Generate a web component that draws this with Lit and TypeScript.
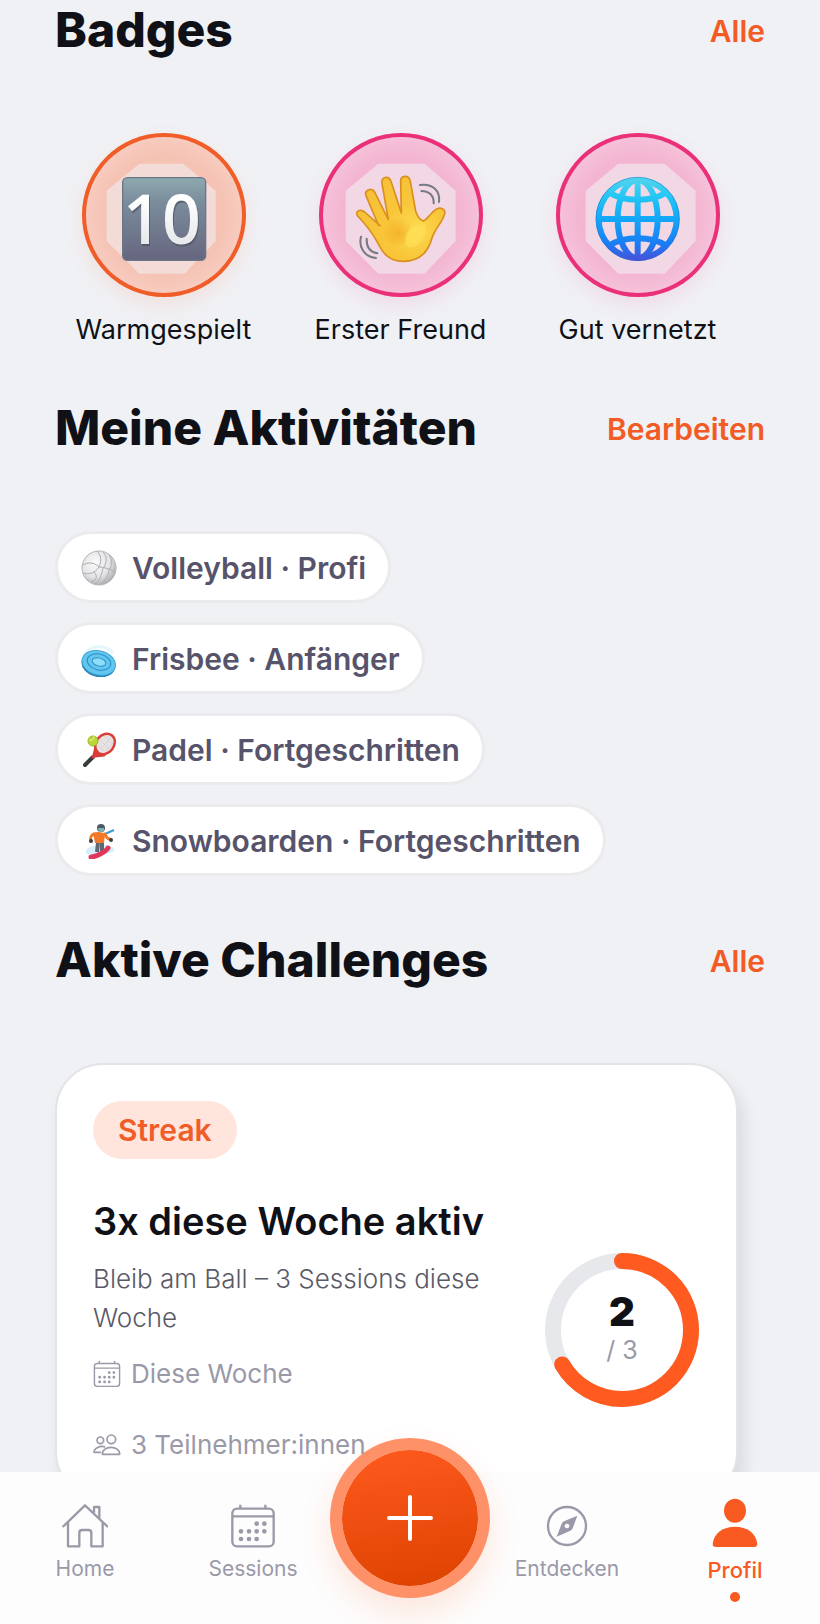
import { LitElement, html, css, CSSResult, TemplateResult } from "lit";
import { customElement, property } from "lit/decorators.js";

const warmgespielt = html`
    <svg viewBox="66 39 492 492" aria-hidden="true">
        <defs>
            <linearGradient id="tile" x1="0" y1="0" x2="0" y2="1">
                <stop offset="0" stop-color="#8ea9b0" />
                <stop offset="0.3" stop-color="#7a8c9b" />
                <stop offset="1" stop-color="#66667f" />
            </linearGradient>
            <linearGradient id="digits" x1="0" y1="0" x2="0" y2="1">
                <stop offset="0.3" stop-color="#ffffff" />
                <stop offset="1" stop-color="#dcdee2" />
            </linearGradient>
        </defs>
        <path d="M238 131H370L467 212V363L374 461H238L140 363V212Z" fill="#f0f2f6" fill-opacity="0.55" />
        <rect x="188" y="173" width="249" height="248" rx="14" fill="url(#tile)" stroke="#6b7787" stroke-width="4" />
        <g font-family="Open Sans, sans-serif" font-size="204" font-weight="600" text-anchor="middle">
            <text x="309" y="377" fill="#4b5363" fill-opacity="0.7">10</text>
            <text x="306" y="372" fill="url(#digits)">10</text>
        </g>
    </svg>
`;

const ersterFreund = html`
    <svg viewBox="57 39 492 492" aria-hidden="true">
        <defs>
            <radialGradient id="palm" gradientUnits="userSpaceOnUse" cx="345" cy="330" r="170">
                <stop offset="0" stop-color="#fddc50" />
                <stop offset="0.5" stop-color="#f9c63a" />
                <stop offset="1" stop-color="#f6c136" />
            </radialGradient>
            <radialGradient id="crease" gradientUnits="userSpaceOnUse" cx="295" cy="338" r="50">
                <stop offset="0" stop-color="#f0a01f" stop-opacity="0.6" />
                <stop offset="1" stop-color="#f0a01f" stop-opacity="0" />
            </radialGradient>
        </defs>
        <path d="M235 131H374L467 212V363L374 461H235L137 363V212Z" fill="#f0f2f6" fill-opacity="0.55" />
        <path
            d="M235 315L198 227C192 211 214 201 224 216L265 299L246 191C243 170 266 165 273 184L304 279L302 184C302 165 327 163 331 184L347 273C352 290 359 299 369 303C378 303 392 279 407 269C421 259 438 267 434 281C427 308 404 326 395 357C385 393 360 424 309 424C266 424 249 399 234 370C222 347 199 315 173 288C164 274 179 265 194 276L240 317Z"
            fill="url(#palm)"
            stroke="#d98f20"
            stroke-width="5"
            stroke-linejoin="round"
        />
        <path d="M244 312C263 299 286 297 306 292C324 287 341 288 350 297C335 319 318 330 312 373C290 382 258 370 240 335Z" fill="url(#crease)" />
        <path d="M320 380C310 345 335 312 372 312C392 330 360 392 320 380Z" fill="#ffe15a" fill-opacity="0.6" />
        <g fill="none" stroke="#777985" stroke-width="6" stroke-linecap="round">
            <path d="M360 195C397 190 421 211 417 246" />
            <path d="M364 213C388 213 402 227 401 250" />
            <path d="M183 350C175 380 193 411 228 414" />
            <path d="M200 356C199 380 211 396 232 400" />
        </g>
    </svg>
`;

const gutVernetzt = html`
    <svg viewBox="48 39 492 492" aria-hidden="true">
        <defs>
            <linearGradient id="globe" gradientUnits="userSpaceOnUse" x1="0" y1="170" x2="0" y2="423">
                <stop offset="0" stop-color="#55d5ee" />
                <stop offset="0.25" stop-color="#22c5f5" />
                <stop offset="0.5" stop-color="#12a7f8" />
                <stop offset="0.8" stop-color="#1a7cf5" />
                <stop offset="1" stop-color="#4a4fd8" />
            </linearGradient>
        </defs>
        <path d="M235 131H374L467 212V363L374 461H235L137 363V212Z" fill="#f0f2f6" fill-opacity="0.55" />
        <g fill="none" stroke="url(#globe)" stroke-width="18">
            <circle cx="293" cy="297" r="117" />
            <ellipse cx="293" cy="297" rx="60" ry="117" />
            <path d="M284 180H302V414H284Z" stroke="none" fill="url(#globe)" />
            <path d="M176 288H410V306H176Z" stroke="none" fill="url(#globe)" />
            <path d="M207 217C250 247 336 247 379 217" />
            <path d="M207 377C250 347 336 347 379 377" />
        </g>
        <circle cx="293" cy="297" r="125" fill="none" stroke="#1d74bd" stroke-opacity="0.5" stroke-width="3" />
    </svg>
`;

const volleyball = html`
    <svg viewBox="0 0 36 36" aria-hidden="true">
        <defs>
            <radialGradient id="ball" cx="0.4" cy="0.35" r="0.7">
                <stop offset="0" stop-color="#fbfbfb" />
                <stop offset="0.6" stop-color="#e4e4e6" />
                <stop offset="1" stop-color="#a9a9ad" />
            </radialGradient>
        </defs>
        <circle cx="18" cy="18" r="17" fill="url(#ball)" stroke="#b4b4b8" />
        <path
            d="M18 17C13 12 7 12 2 15M18 17C14 23 8 25 2 23M18 17C21 10 20 5 16 1M18 17C23 17 29 19 34 22M22 18C21 25 18 31 14 34M28 19C28 25 24 31 20 34M13 22C16 25 17 30 10 32M22 2C26 6 26 12 23 17M28 5C31 9 31 14 29 19"
            fill="none"
            stroke="#adadb2"
        />
    </svg>
`;

const frisbee = html`
    <svg viewBox="0 0 36 36" aria-hidden="true">
        <path d="M4 13C9 4 25 3 32 12" fill="none" stroke="#e4f5fc" stroke-width="3" />
        <g transform="rotate(14 18 21)">
            <ellipse cx="18" cy="24" rx="17" ry="12" fill="#2583b8" />
            <ellipse cx="18" cy="22" rx="17" ry="12" fill="#62c6f0" stroke="#3ea5d4" />
            <g fill="none" stroke="#2790c4">
                <ellipse cx="18" cy="21" rx="12" ry="8" />
                <ellipse cx="18" cy="21" rx="7" ry="4" fill="#8fdcf8" />
            </g>
        </g>
    </svg>
`;

const racket = html`
    <svg viewBox="0 0 36 36" aria-hidden="true">
        <path d="M12 25L4 33" stroke="#363c3b" stroke-width="4" stroke-linecap="round" />
        <path d="M12 25L17 20M13 23L15 15M14 24L23 23" stroke="#d83a35" stroke-width="3" stroke-linecap="round" />
        <ellipse cx="24" cy="12" rx="9" ry="11" transform="rotate(38 24 12)" fill="#e8e3e3" stroke="#dc3d38" stroke-width="2.5" />
        <path d="M19 8L28 17M23 4L32 12M17 13L23 19M20 17L30 5M25 20L33 9" stroke="#d4ced0" stroke-width="0.7" />
        <circle cx="12" cy="9" r="5" fill="#bcd838" stroke="#98b428" />
        <path d="M8 8C11 9 13 7 13 4" fill="none" stroke="#e9f4a0" />
    </svg>
`;

const snowboarder = html`
    <svg viewBox="0 0 36 36" aria-hidden="true">
        <path d="M5 31C4 25 10 22 18 23C26 21 35 24 33 28C29 31 27 29 24 32Z" fill="#d4effa" />
        <path d="M24 11L33 7" stroke="#3c9bd8" stroke-width="2" />
        <path d="M13 11C10 12 9 15 10 18M24 11C25 14 27 16 29 16" fill="none" stroke="#ef7a2b" stroke-width="3" stroke-linecap="round" />
        <path d="M12 10C16 8 22 9 24 11L23 20H14Z" fill="#f2782a" />
        <path d="M17 20L16 29M21 20L21 28" fill="none" stroke="#5f6770" stroke-width="4" stroke-linejoin="round" />
        <path d="M10 34C14 34 25 29 27 25" fill="none" stroke="#e0385c" stroke-width="5" stroke-linecap="round" />
        <circle cx="20" cy="5" r="4" fill="#4d5b61" />
        <path d="M17 5H23V9H18Z" fill="#7fb1b4" />
        <circle cx="10" cy="18" r="2" fill="#38414a" />
        <circle cx="30" cy="17" r="2" fill="#38414a" />
    </svg>
`;

const calendar = html`
    <svg viewBox="690 218 138 138" fill="none" stroke="currentColor" stroke-width="7" aria-hidden="true">
        <rect x="697" y="235" width="124" height="113" rx="14" />
        <path d="M697 258H821M721 223V235M796 223V235" />
        <path
            d="M770 280h0M793 280h0M723 303h0M747 303h0M770 303h0M793 303h0M723 326h0M747 326h0M770 326h0"
            stroke-width="14"
            stroke-linecap="round"
        />
    </svg>
`;

const people = html`
    <svg viewBox="163 750 84 84" fill="none" stroke="currentColor" stroke-width="5" stroke-linejoin="round" aria-hidden="true">
        <circle cx="185" cy="778" r="10" />
        <circle cx="218" cy="775" r="13" />
        <path d="M191 820C190 792 244 792 243 820Z" />
        <path d="M200 798C184 793 166 801 166 814H187" />
    </svg>
`;

const home = html`
    <svg viewBox="183 218 138 138" fill="none" stroke="currentColor" stroke-width="7" stroke-linejoin="round" aria-hidden="true">
        <path d="M185 290L252 225L321 290" />
        <path d="M201 277V348H235V307Q235 299 243 299H263Q271 299 271 307V348H305V277" />
        <path d="M279 247V230H295V264" />
    </svg>
`;

const compass = html`
    <svg viewBox="403 218 138 138" aria-hidden="true">
        <circle cx="472" cy="287" r="57" fill="none" stroke="currentColor" stroke-width="7" />
        <path
            fill="currentColor"
            fill-rule="evenodd"
            d="M503 256L489 294Q487 299 482 301L441 319L456 280Q458 275 463 273ZM472 280a7 7 0 1 0 .1 0Z"
        />
    </svg>
`;

const person = html`
    <svg viewBox="903 204 150 150" fill="currentColor" aria-hidden="true">
        <ellipse cx="978" cy="242" rx="33" ry="36" />
        <path d="M921 351Q911 351 911 342C914 309 943 290 978 290C1013 290 1042 309 1045 342Q1045 351 1035 351Z" />
    </svg>
`;

@customElement("section-header")
export class SectionHeader extends LitElement {
    @property({ type: String }) heading = "";
    @property({ type: String }) action = "";

    static get styles(): CSSResult {
        return css`
            :host {
                align-items: center;
                display: flex;
                justify-content: space-between;
                margin-bottom: 75px;
            }

            .heading {
                color: #101117;
                font-size: 48px;
                font-weight: 800;
                line-height: 56px;
                margin: 0;
            }

            .action {
                color: #f35b26;
                font-size: 30px;
                font-weight: 600;
                line-height: 34px;
                padding-top: 2px;
                text-decoration: none;
            }
        `;
    }

    render(): TemplateResult {
        return html`
            <h2 class="heading">${this.heading}</h2>
            <a class="action" href="#">${this.action}</a>
        `;
    }
}

@customElement("progress-ring")
export class ProgressRing extends LitElement {
    @property({ type: Number }) value = 0;
    @property({ type: Number }) max = 1;

    static get styles(): CSSResult {
        return css`
            :host {
                display: grid;
                flex: none;
                height: 156px;
                place-items: center;
                width: 156px;
            }

            .ring,
            .text {
                grid-area: 1 / 1;
            }

            .ring {
                display: block;
                fill: none;
                height: 100%;
                stroke-width: 16px;
                width: 100%;
            }

            .track {
                stroke: #e6e8ec;
            }

            .bar {
                stroke: #ff5a1f;
                stroke-linecap: round;
            }

            .text {
                text-align: center;
            }

            .value {
                color: #101117;
                font-size: 40px;
                font-weight: 900;
                line-height: 40px;
            }

            .max {
                color: #9a99a8;
                font-size: 25px;
                line-height: 36px;
            }
        `;
    }

    render(): TemplateResult {
        const done = (this.value / this.max) * 100;
        return html`
            <svg class="ring" viewBox="0 0 156 156" aria-hidden="true">
                <circle class="track" cx="78" cy="78" r="69" />
                <circle
                    class="bar"
                    cx="78"
                    cy="78"
                    r="69"
                    pathLength="100"
                    stroke-dasharray="${done} 100"
                    transform="rotate(-90 78 78)"
                />
            </svg>
            <div class="text">
                <div class="value">${this.value}</div>
                <div class="max">/ ${this.max}</div>
            </div>
        `;
    }
}

@customElement("app-root")
export class AppRoot extends LitElement {
    private badges = [
        { name: "Warmgespielt", tone: "orange", art: warmgespielt },
        { name: "Erster Freund", tone: "pink", art: ersterFreund },
        { name: "Gut vernetzt", tone: "pink", art: gutVernetzt },
    ];

    private activities = [
        { name: "Volleyball · Profi", icon: volleyball },
        { name: "Frisbee · Anfänger", icon: frisbee },
        { name: "Padel · Fortgeschritten", icon: racket },
        { name: "Snowboarden · Fortgeschritten", icon: snowboarder },
    ];

    static get styles(): CSSResult {
        return css`
            :host {
                background-color: #f0f1f5;
                color: #101117;
                display: flex;
                flex-direction: column;
                font-family: Inter, "Liberation Sans", sans-serif;
                height: 100vh;
            }

            * {
                box-sizing: border-box;
            }

            svg {
                display: block;
            }

            .content {
                display: flex;
                flex: 1;
                flex-direction: column;
                gap: 54px;
                min-height: 0;
                overflow-y: auto;
                padding: 2px 55px 0;
                scrollbar-width: none;
            }

            .badges,
            .activities {
                list-style: none;
                margin: 0;
                padding: 0;
            }

            .badges {
                display: grid;
                gap: 20px;
                grid-template-columns: repeat(3, 1fr);
                margin-right: 19px;
            }

            .badge {
                align-items: center;
                display: flex;
                flex-direction: column;
                font-size: 27px;
                gap: 17px;
                line-height: 32px;
                white-space: nowrap;
            }

            .medal {
                border-radius: 50%;
                height: 164px;
                width: 164px;
            }

            .medal svg {
                height: 100%;
                width: 100%;
            }

            .orange {
                background: radial-gradient(circle, #f5c2b3 50%, #f7cdc1 70%);
                box-shadow: inset 0 0 0 4px #f05d28, 0 8px 20px rgba(255, 90, 31, 0.1);
            }

            .pink {
                background: radial-gradient(circle, #f3b5d1 50%, #f6c3da 70%);
                box-shadow: inset 0 0 0 4px #ea3079, 0 8px 20px rgba(240, 40, 120, 0.1);
            }

            .activities {
                align-items: flex-start;
                display: flex;
                flex-direction: column;
                gap: 19px;
                padding-bottom: 2px;
            }

            .chip {
                align-items: center;
                background-color: #fff;
                border: 3px solid #ebebed;
                border-radius: 36px;
                color: #56536a;
                display: flex;
                font-size: 30px;
                font-weight: 600;
                gap: 15px;
                height: 72px;
                line-height: 34px;
                padding: 2px 22px 0 23px;
                white-space: nowrap;
            }

            .chip svg {
                height: 36px;
                width: 36px;
            }

            .card {
                background-color: #fff;
                border: 2px solid #e3e4e6;
                border-radius: 48px;
                box-shadow: 6px 12px 16px rgba(20, 20, 40, 0.1);
                margin-right: 27px;
                padding: 36px;
            }

            .tag {
                background-color: #ffe5dc;
                border-radius: 29px;
                color: #f05d28;
                display: inline-block;
                font-size: 30px;
                font-weight: 600;
                line-height: 34px;
                padding: 12px 25px;
            }

            .body {
                align-items: center;
                display: flex;
                gap: 36px;
                justify-content: space-between;
                margin-top: 39px;
            }

            .title {
                font-size: 38px;
                font-weight: 600;
                line-height: 46px;
                margin: 0 0 15px;
            }

            .description {
                color: #5a5966;
                font-size: 26px;
                font-weight: 300;
                line-height: 39px;
                margin: 0 0 20px;
            }

            .meta {
                align-items: center;
                color: #9a99a8;
                display: flex;
                font-size: 26px;
                gap: 10px;
                line-height: 34px;
            }

            .meta + .meta {
                margin-top: 37px;
            }

            .meta svg {
                height: 28px;
                width: 28px;
            }

            .tabs {
                background-color: #fdfdfd;
                display: grid;
                flex: none;
                grid-template-columns: 170fr 166fr minmax(0, 148fr) 166fr 170fr;
                height: 152px;
                position: relative;
            }

            .tab {
                align-items: center;
                color: #9a99a8;
                display: flex;
                flex-direction: column;
                font-size: 21px;
                gap: 6px;
                line-height: 28px;
                padding-top: 31px;
                text-decoration: none;
            }

            .tab svg {
                height: 46px;
                width: 46px;
            }

            .active {
                color: #f95a22;
                font-size: 22px;
                font-weight: 500;
                gap: 8px;
                padding-top: 26px;
            }

            .active svg {
                height: 50px;
                width: 50px;
            }

            .active::after {
                background-color: currentColor;
                border-radius: 50%;
                content: "";
                height: 10px;
                width: 10px;
            }

            .add {
                background: linear-gradient(170deg, #ff5a1f, #dd4200) padding-box;
                border: 12px solid rgba(255, 98, 42, 0.7);
                border-radius: 50%;
                box-shadow: 0 16px 32px rgba(255, 90, 31, 0.14);
                color: #fff;
                display: grid;
                height: 160px;
                justify-self: center;
                margin-top: -34px;
                padding: 0;
                place-items: center;
                width: 160px;
            }

            .add svg {
                height: 46px;
                width: 46px;
            }
        `;
    }

    render(): TemplateResult {
        return html`
            <main class="content">
                <section>
                    <section-header heading="Badges" action="Alle"></section-header>
                    <ul class="badges">
                        ${this.badges.map(
                            (badge) => html`
                                <li class="badge">
                                    <div class="medal ${badge.tone}">${badge.art}</div>
                                    ${badge.name}
                                </li>
                            `
                        )}
                    </ul>
                </section>
                <section>
                    <section-header heading="Meine Aktivitäten" action="Bearbeiten"></section-header>
                    <ul class="activities">
                        ${this.activities.map((activity) => html`<li class="chip">${activity.icon}${activity.name}</li>`)}
                    </ul>
                </section>
                <section>
                    <section-header heading="Aktive Challenges" action="Alle"></section-header>
                    <article class="card">
                        <span class="tag">Streak</span>
                        <div class="body">
                            <div>
                                <h3 class="title">3x diese Woche aktiv</h3>
                                <p class="description">Bleib am Ball – 3 Sessions diese Woche</p>
                                <div class="meta">${calendar}Diese Woche</div>
                                <div class="meta">${people}3 Teilnehmer:innen</div>
                            </div>
                            <progress-ring value="2" max="3"></progress-ring>
                        </div>
                    </article>
                </section>
            </main>
            <nav class="tabs">
                <a class="tab" href="#">${home}Home</a>
                <a class="tab" href="#">${calendar}Sessions</a>
                <button class="add" aria-label="Neue Session">
                    <svg viewBox="0 0 46 46" stroke="currentColor" stroke-width="4" stroke-linecap="round" aria-hidden="true">
                        <path d="M23 2V44M2 23H44" />
                    </svg>
                </button>
                <a class="tab" href="#">${compass}Entdecken</a>
                <a class="tab active" href="#" aria-current="page">${person}Profil</a>
            </nav>
        `;
    }
}
